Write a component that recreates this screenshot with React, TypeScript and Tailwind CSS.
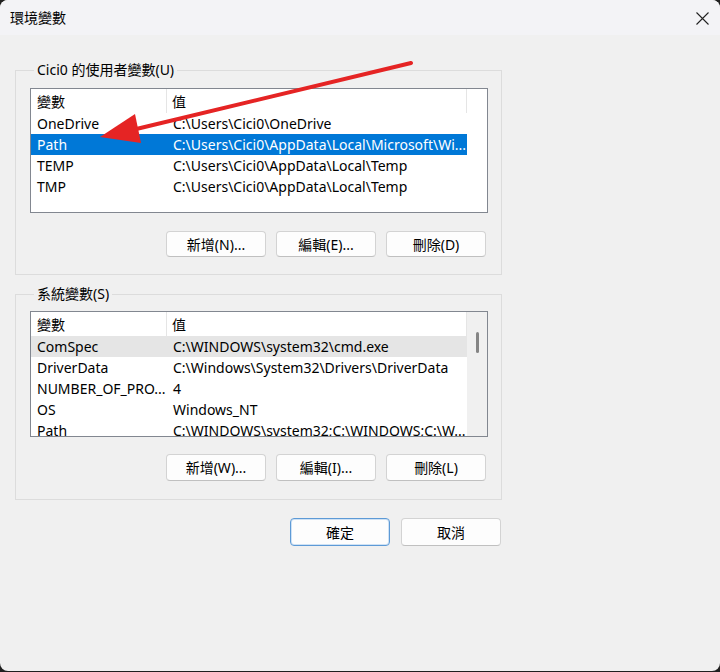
import React from "react";

const font = {
  fontFamily: '"Noto Sans", "Noto Sans CJK TC", sans-serif',
};

type Row = { name: string; value: string };

const userVars: Row[] = [
  { name: "OneDrive", value: "C:\\Users\\Cici0\\OneDrive" },
  { name: "Path", value: "C:\\Users\\Cici0\\AppData\\Local\\Microsoft\\Wi..." },
  { name: "TEMP", value: "C:\\Users\\Cici0\\AppData\\Local\\Temp" },
  { name: "TMP", value: "C:\\Users\\Cici0\\AppData\\Local\\Temp" },
];

const systemVars: Row[] = [
  { name: "ComSpec", value: "C:\\WINDOWS\\system32\\cmd.exe" },
  { name: "DriverData", value: "C:\\Windows\\System32\\Drivers\\DriverData" },
  { name: "NUMBER_OF_PRO...", value: "4" },
  { name: "OS", value: "Windows_NT" },
  { name: "Path", value: "C:\\WINDOWS\\system32;C:\\WINDOWS;C:\\W..." },
];

function VarList({
  rows,
  selected,
  hovered,
  scrollbar,
  height,
}: {
  rows: Row[];
  selected?: number;
  hovered?: number;
  scrollbar?: boolean;
  height: string;
}) {
  return (
    <div className={`flex bg-white border border-[#828790] ${height} overflow-hidden`}>
      <div className="w-[436px] flex flex-col">
        <div className="flex h-[24px] items-center text-[14px] text-black shrink-0">
          <div className="w-[136px] h-full pl-[6px] flex items-center border-r border-[#e5e5e5]">變數</div>
          <div className="flex-1 h-full pl-[5px] flex items-center border-r border-[#e5e5e5]">值</div>
        </div>
        {rows.map((r, i) => {
          const sel = i === selected;
          const hov = i === hovered;
          return (
            <div
              key={r.name + i}
              className={`flex h-[21px] shrink-0 items-center text-[14px] whitespace-nowrap ${
                sel ? "bg-[#0078d7] text-white" : hov ? "bg-[#e5e5e5] text-black" : "text-black"
              }`}
            >
              <div className="w-[136px] pl-[6px] overflow-hidden">{r.name}</div>
              <div className="flex-1 pl-[6px] overflow-hidden">{r.value}</div>
            </div>
          );
        })}
      </div>
      <div className={`flex-1 flex justify-center pt-[20px] ${scrollbar ? "bg-[#f0f0f0]" : "bg-white"}`}>
        {scrollbar && <div className="w-[3px] h-[21px] rounded-full bg-[#858585]" />}
      </div>
    </div>
  );
}

function Btn({ label, primary }: { label: string; primary?: boolean }) {
  return (
    <button
      className={`w-[100px] rounded-[4px] bg-[#fdfdfd] text-[14px] text-black flex items-center justify-center ${
        primary
          ? "h-[28px] border border-[#5d9ad6] shadow-[inset_0_0_0_1px_#cfe2f5]"
          : "border border-[#d3d3d3] border-b-[#c0c0c0]"
      }`}
    >
      {label}
    </button>
  );
}

function Group({
  title,
  children,
  className,
}: {
  title: string;
  children: React.ReactNode;
  className?: string;
}) {
  return (
    <fieldset className={`w-[487px] border border-[#dcdcdc] pl-[14px] pr-[13px] ${className ?? ""}`}>
      <legend className="ml-[4px] px-[3px] text-[14px] leading-[20px] text-black">{title}</legend>
      {children}
    </fieldset>
  );
}

export default function App() {
  return (
    <div className="w-[720px] h-[672px] bg-[#202020]" style={font}>
      <div className="relative w-[720px] h-[671px] rounded-[8px] overflow-hidden bg-[#f0f0f0] flex flex-col">
        <div className="h-[35px] shrink-0 bg-[#f3f3f6] flex items-center justify-between pl-[10px] pr-[11px]">
          <span className="text-[14px] text-black">環境變數</span>
          <svg width="13" height="13" viewBox="0 0 13 13" className="mt-[1px]">
            <path d="M0.5 0.5 L12.5 12.5 M12.5 0.5 L0.5 12.5" stroke="#222" strokeWidth="1.1" />
          </svg>
        </div>

        <div className="flex flex-col pl-[15px] pt-[25px]">
          <Group title="Cici0 的使用者變數(U)" className="pb-[17px]">
            <div className="mt-[8px]">
              <VarList rows={userVars} selected={1} height="h-[125px]" />
            </div>
            <div className="flex justify-end gap-[10px] mt-[18px] mr-[2px] h-[26px]">
              <Btn label="新增(N)..." />
              <Btn label="編輯(E)..." />
              <Btn label="刪除(D)" />
            </div>
          </Group>

          <Group title="系統變數(S)" className="mt-[9px] pb-[18px]">
            <div className="mt-[7px]">
              <VarList rows={systemVars} hovered={0} scrollbar height="h-[126px]" />
            </div>
            <div className="flex justify-end gap-[10px] mt-[17px] mr-[2px] h-[27px]">
              <Btn label="新增(W)..." />
              <Btn label="編輯(I)..." />
              <Btn label="刪除(L)" />
            </div>
          </Group>

          <div className="w-[486px] flex justify-end gap-[11px] mt-[18px]">
            <Btn label="確定" primary />
            <div className="h-[28px] flex">
              <Btn label="取消" />
            </div>
          </div>
        </div>

        {/* red annotation arrow */}
        <svg className="absolute left-0 top-0 pointer-events-none" width="720" height="672">
          <line x1="411" y1="63" x2="128" y2="131" stroke="#e52424" strokeWidth="4" strokeLinecap="round" />
          <polygon points="100,137 135,114 141,143" fill="#e52424" />
        </svg>
      </div>
    </div>
  );
}
